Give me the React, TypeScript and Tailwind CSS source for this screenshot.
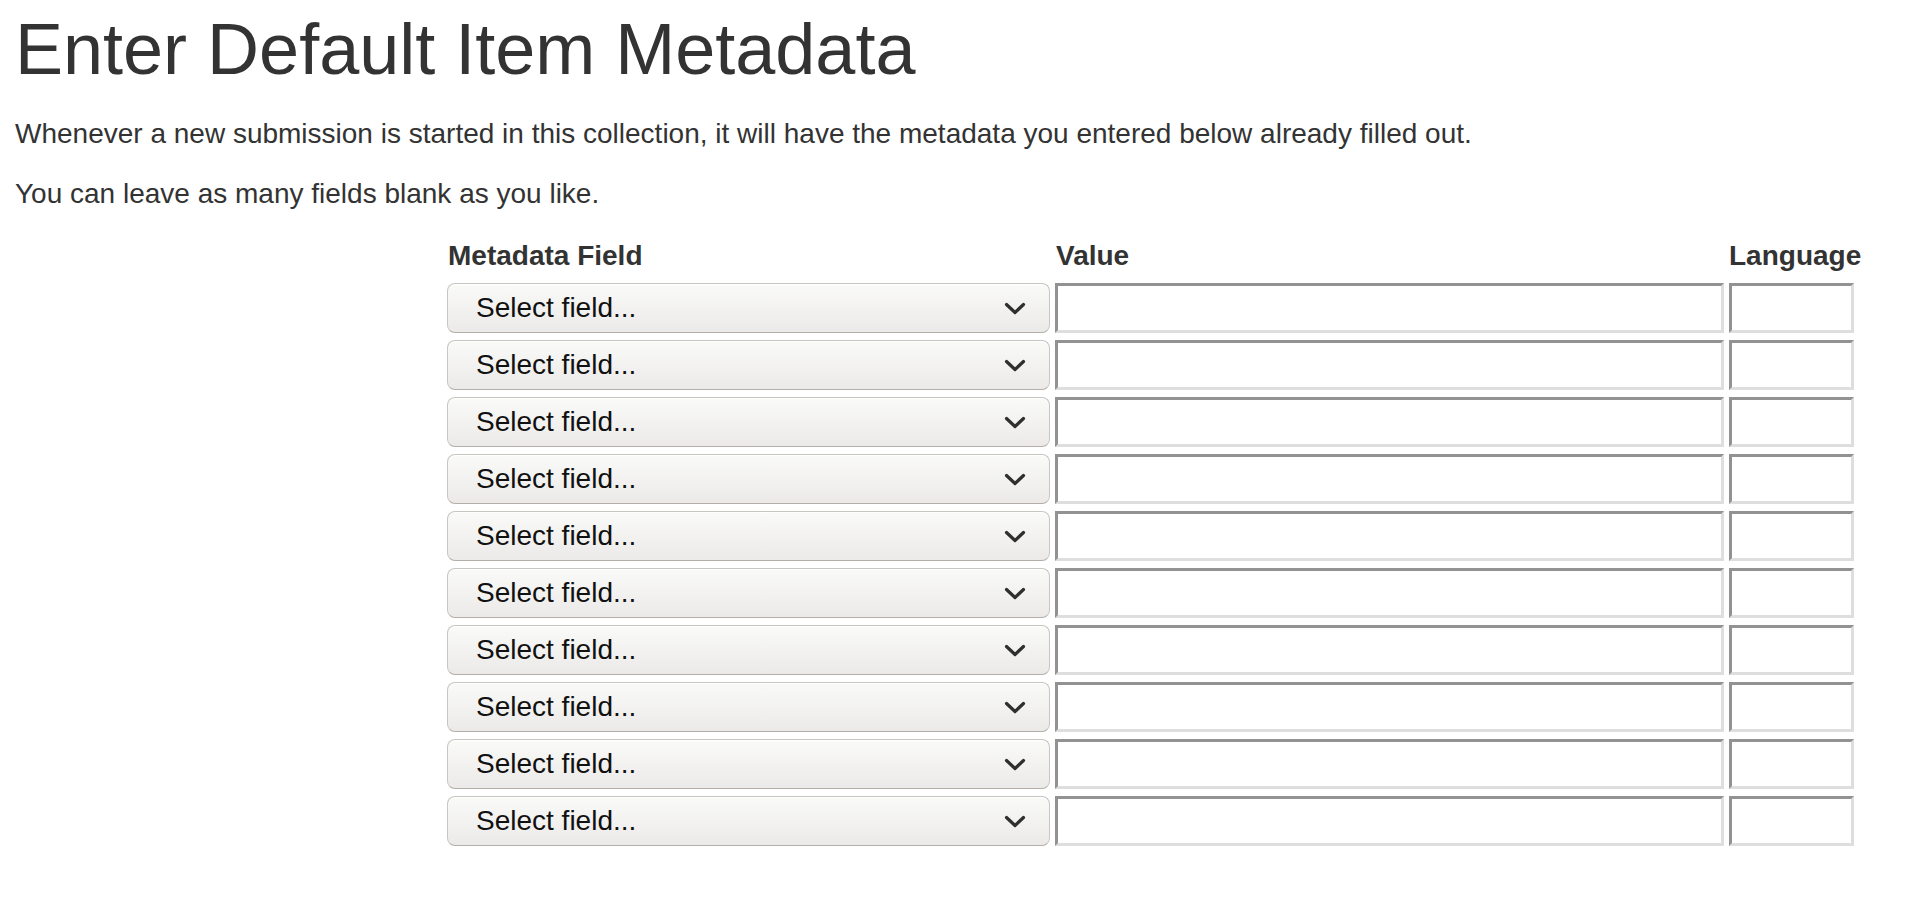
import React from "react";

function Chevron() {
  return (
    <svg width="22" height="13" viewBox="0 0 22 13" className="shrink-0">
      <polyline
        points="2.5,2.5 11,10.5 19.5,2.5"
        fill="none"
        stroke="#2f2f2f"
        strokeWidth="3.2"
        strokeLinecap="round"
        strokeLinejoin="round"
      />
    </svg>
  );
}

function Row() {
  return (
    <>
      <div className="h-[50px] w-[603px] rounded-[8px] border border-[#c9c6c1] border-b-[#b3aea8] bg-gradient-to-b from-[#fafaf9] to-[#ebeae8] shadow-[inset_0_1px_0_#ffffff] flex items-center pl-[28px] pr-[23px]">
        <span className="flex-1 text-[28px] leading-none text-[#111111]">Select field...</span>
        <Chevron />
      </div>
      <div className="h-[50px] w-[669px] border-[3px] border-t-[#929292] border-l-[#929292] border-b-[#dedede] border-r-[#dedede] bg-white" />
      <div className="h-[50px] w-[125px] border-[3px] border-t-[#929292] border-l-[#929292] border-b-[#dedede] border-r-[#dedede] bg-white" />
    </>
  );
}

export default function App() {
  return (
    <div
      className="min-h-[910px] bg-white text-[#333333] px-[15px]"
      style={{ fontFamily: '"Liberation Sans", Arial, Helvetica, sans-serif' }}
    >
      <h1 className="pt-[10px] text-[72px] leading-[79px] font-normal mb-[25px]">Enter Default Item Metadata</h1>
      <p className="text-[28px] leading-[40px] mb-[20px]">
        Whenever a new submission is started in this collection, it will have the metadata you entered below already filled out.
      </p>
      <p className="text-[28px] leading-[40px] mb-[22px]">You can leave as many fields blank as you like.</p>
      <div className="ml-[432px] grid grid-cols-[603px_669px_133px] gap-x-[5px] gap-y-[7px] items-start">
        <div className="text-[28px] leading-[40px] font-bold pl-[1px]">Metadata Field</div>
        <div className="text-[28px] leading-[40px] font-bold pl-[1px]">Value</div>
        <div className="text-[28px] leading-[40px] font-bold">Language</div>
        {Array.from({ length: 10 }).map((_, i) => (
          <Row key={i} />
        ))}
      </div>
    </div>
  );
}
